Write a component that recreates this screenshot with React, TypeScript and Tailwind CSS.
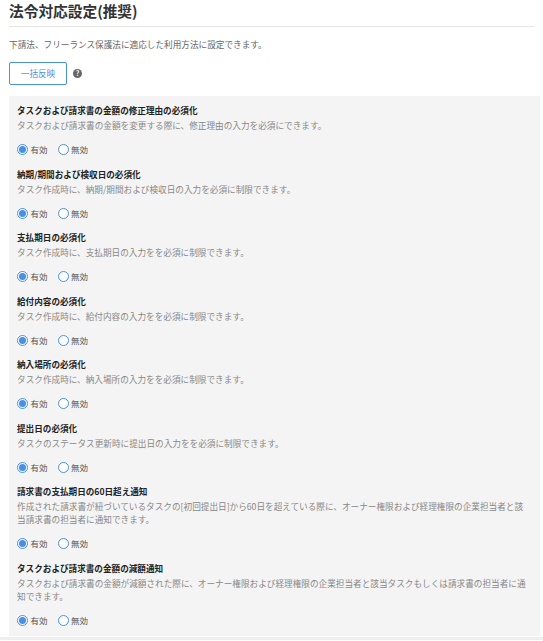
import { useState } from 'react';

interface SettingItem {
  title: string;
  description: string;
}

const settings: SettingItem[] = [
  {
    title: 'タスクおよび請求書の金額の修正理由の必須化',
    description: 'タスクおよび請求書の金額を変更する際に、修正理由の入力を必須にできます。',
  },
  {
    title: '納期/期間および検収日の必須化',
    description: 'タスク作成時に、納期/期間および検収日の入力を必須に制限できます。',
  },
  {
    title: '支払期日の必須化',
    description: 'タスク作成時に、支払期日の入力をを必須に制限できます。',
  },
  {
    title: '給付内容の必須化',
    description: 'タスク作成時に、給付内容の入力をを必須に制限できます。',
  },
  {
    title: '納入場所の必須化',
    description: 'タスク作成時に、納入場所の入力をを必須に制限できます。',
  },
  {
    title: '提出日の必須化',
    description: 'タスクのステータス更新時に提出日の入力をを必須に制限できます。',
  },
  {
    title: '請求書の支払期日の60日超え通知',
    description:
      '作成された請求書が紐づいているタスクの[初回提出日]から60日を超えている際に、オーナー権限および経理権限の企業担当者と該当請求書の担当者に通知できます。',
  },
  {
    title: 'タスクおよび請求書の金額の減額通知',
    description:
      'タスクおよび請求書の金額が減額された際に、オーナー権限および経理権限の企業担当者と該当タスクもしくは請求書の担当者に通知できます。',
  },
];

function Radio({ label, checked, onClick }: { label: string; checked: boolean; onClick: () => void }) {
  return (
    <button type="button" className="flex items-center" onClick={onClick}>
      <span className="flex h-[11px] w-[11px] items-center justify-center rounded-full border border-[#4a90e2] bg-white">
        {checked ? <span className="h-[7px] w-[7px] rounded-full bg-[#4a90e2]" /> : null}
      </span>
      <span className="ml-[2.5px] text-[8.5px] leading-[11px] text-[#555]">{label}</span>
    </button>
  );
}

function SettingRow({ item }: { item: SettingItem }) {
  const [enabled, setEnabled] = useState(true);
  return (
    <div className="mb-[12.5px]">
      <p className="text-[8.6px] font-bold leading-[13px] text-[#222]">{item.title}</p>
      <p className="mt-[2px] text-[8.65px] leading-[13px] text-[#888]">{item.description}</p>
      <div className="mt-[12px] flex gap-[10px]">
        <Radio label="有効" checked={enabled} onClick={() => setEnabled(true)} />
        <Radio label="無効" checked={!enabled} onClick={() => setEnabled(false)} />
      </div>
    </div>
  );
}

export default function App() {
  return (
    <div className="h-[641px] w-[543px] overflow-hidden bg-white font-['Noto_Sans_CJK_JP',sans-serif]">
      <div className="px-[9px]">
        <h1 className="h-[27px] border-b border-[#e5e5e5] pt-[2px] text-[14.7px] font-bold leading-[18px] text-[#333]">
          法令対応設定(推奨)
        </h1>
        <p className="mt-[11px] text-[8.65px] leading-[12px] text-[#666]">
          下請法、フリーランス保護法に適応した利用方法に設定できます。
        </p>
        <div className="mt-[12px] flex items-start">
          <button
            type="button"
            className="h-[23px] w-[58px] rounded-[2px] border border-[#4a90e2] text-[8.6px] text-[#4a90e2]"
          >
            一括反映
          </button>
          <span className="ml-[6px] mt-[7px] flex h-[9px] w-[9px] items-center justify-center rounded-full bg-[#666] text-[7px] font-bold leading-none text-white">
            ?
          </span>
        </div>
        <div className="mt-[11px] h-[540px] w-[531px] bg-[#f4f4f4] pl-[8px] pr-[9px] pt-[8px]">
          {settings.map((item) => (
            <SettingRow key={item.title} item={item} />
          ))}
        </div>
      </div>
      <div className="mt-px h-[3px] bg-[#eee]" />
    </div>
  );
}
